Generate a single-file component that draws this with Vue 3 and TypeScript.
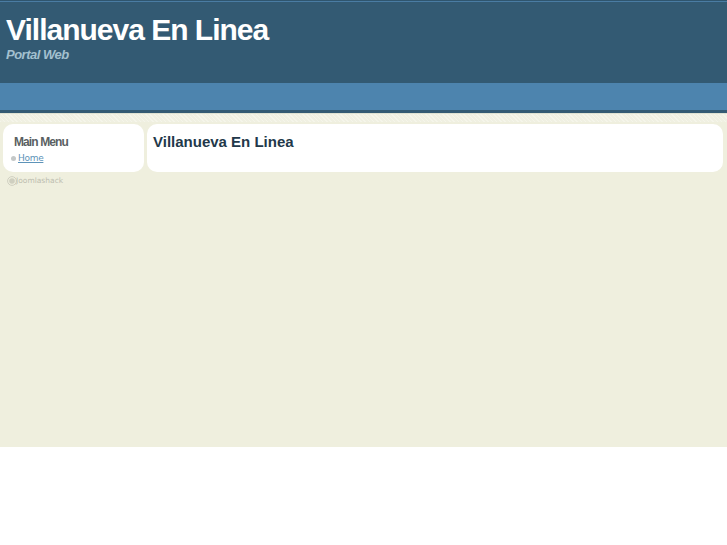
<template>
  <div class="page">
    <header class="header">
      <h1 class="site-title">Villanueva En Linea</h1>
      <p class="site-slogan">Portal Web</p>
    </header>
    <nav class="nav"></nav>
    <div class="body">
      <div class="columns">
        <aside class="card side">
          <h3 class="side-title">Main Menu</h3>
          <ul class="menu">
            <li v-for="item in menu" :key="item">
              <span class="bullet"></span>
              <a href="#" class="menu-link">{{ item }}</a>
            </li>
          </ul>
        </aside>
        <main class="card content">
          <h2 class="content-title">Villanueva En Linea</h2>
        </main>
      </div>
      <div class="credit">
        <svg class="credit-logo" width="10" height="10" viewBox="0 0 10 10">
          <circle cx="5" cy="5" r="4.4" fill="none" stroke="#cfcfc0" stroke-width="1" />
          <circle cx="5" cy="5" r="2.8" fill="#cfcfc0" />
        </svg>
        <span class="credit-text">Joomlashack</span>
      </div>
    </div>
  </div>
</template>

<script setup lang="ts">
const menu: string[] = ['Home']
</script>

<style>
body {
  background: #fff;
}
</style>

<style scoped>
.page {
  width: 727px;
  font-family: "Liberation Sans", Arial, sans-serif;
}

.header {
  box-sizing: border-box;
  height: 83px;
  padding: 13px 6px 0;
  background: #335a73;
  border-top: 1px solid #2f556e;
  box-shadow: inset 0 1px 0 #4a7ca3;
}

.site-title {
  margin: 0;
  color: #fff;
  font-size: 30px;
  line-height: 32px;
  font-weight: bold;
  letter-spacing: -1px;
}

.site-slogan {
  margin: 0;
  color: #a3c0cf;
  font-size: 13px;
  line-height: 17px;
  font-weight: bold;
  font-style: italic;
  letter-spacing: -0.5px;
}

.nav {
  height: 27px;
  background: #4d84ae;
  border-bottom: 3px solid #335a73;
}

.body {
  box-sizing: border-box;
  height: 334px;
  padding: 10px 4px 0 3px;
  background:
    repeating-linear-gradient(45deg, #f5f5ea 0 1px, #f0f0e2 1px 3px) top / 100% 8px no-repeat,
    #efefde;
  border-top: 1px solid #dfe2d2;
}

.columns {
  display: flex;
  gap: 3px;
}

.card {
  box-sizing: border-box;
  height: 48px;
  background: #fff;
  border-radius: 10px;
}

.side {
  width: 141px;
  padding: 10px 8px 0 11px;
}

.side-title {
  margin: 0;
  color: #5a5f62;
  font-size: 12px;
  line-height: 16px;
  font-weight: bold;
  letter-spacing: -0.9px;
}

.menu {
  margin: 2px 0 0;
  padding: 0;
  list-style: none;
  font-family: "DejaVu Sans", Verdana, sans-serif;
  font-size: 9px;
  line-height: 13px;
}

.menu li {
  display: flex;
  align-items: center;
  gap: 2px;
  margin-left: -3px;
}

.bullet {
  width: 5px;
  height: 5px;
  border-radius: 50%;
  background: #c4c8c8;
}

.menu-link {
  color: #5d93b8;
  letter-spacing: -0.3px;
}

.content {
  flex: 1;
  padding: 8px 6px 0;
}

.content-title {
  margin: 0;
  color: #22384a;
  font-size: 15px;
  line-height: 19px;
  font-weight: bold;
}

.credit {
  display: flex;
  align-items: center;
  margin: 3px 0 0 4px;
  color: #bdbdb0;
  font-family: "DejaVu Sans", Verdana, sans-serif;
  font-size: 7.5px;
  line-height: 12px;
}

.credit-text {
  margin-left: -1px;
}
</style>
